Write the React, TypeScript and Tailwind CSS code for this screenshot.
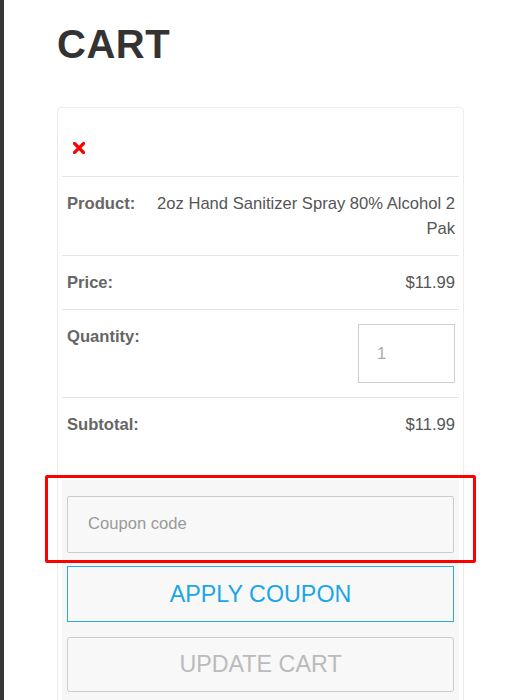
import React from 'react';

const rows = [
  { label: 'Price:', value: '$11.99' },
];

const CartRow = ({ label, children }: { label: string; children: React.ReactNode }) => (
  <div className="flex justify-between items-start border-t border-[#e4e4e4] pt-[14px] pb-[14px] pl-[5px] pr-[4px] leading-[25px]">
    <span className="font-bold text-[#666] shrink-0">{label}</span>
    {children}
  </div>
);

const App = () => {
  return (
    <div className="relative min-h-[700px] bg-white border-l-4 border-[#363636] font-['Liberation_Sans',Arial,sans-serif] text-[16.6px] overflow-hidden">
      {/* Heading */}
      <div className="pl-[53px] pt-[21px]">
        <h1 className="text-[40px] leading-[46px] font-bold text-[#333] tracking-[0.5px]">CART</h1>
      </div>

      {/* Cart card */}
      <div className="ml-[53px] mt-[40px] w-[407px] border border-[#ececec] rounded-[4px] px-[4px] pb-[20px]">
        {/* Remove */}
        <div className="pl-[11px] pt-[34px] pb-[22px]">
          <svg width="12" height="12" viewBox="0 0 12 12">
            <path d="M1.5 1.5 L10.5 10.5 M10.5 1.5 L1.5 10.5" stroke="#ff0000" strokeWidth="3.2" strokeLinecap="square" />
          </svg>
        </div>

        <CartRow label="Product:">
          <span className="text-[#555] text-right ml-[20px]">2oz Hand Sanitizer Spray 80% Alcohol 2 Pak</span>
        </CartRow>

        {rows.map((r) => (
          <CartRow key={r.label} label={r.label}>
            <span className="text-[#555]">{r.value}</span>
          </CartRow>
        ))}

        <CartRow label="Quantity:">
          <div className="w-[97px] h-[59px] border border-[#cfcfcf] flex items-center pl-[18px] text-[#aaa]">1</div>
        </CartRow>

        <CartRow label="Subtotal:">
          <span className="text-[#555]">$11.99</span>
        </CartRow>

        {/* Coupon section */}
        <div className="mt-[29px] bg-[#f7f7f7] px-[5px] pt-[16px] pb-[10px] flex flex-col">
          <div className="h-[57px] border border-[#cccccc] rounded-[2px] bg-[#f8f8f8] flex items-center pl-[20px] text-[#999]">
            Coupon code
          </div>
          <div className="mt-[13px] h-[56px] ring-1 ring-inset ring-[#29abe2] bg-[#f8f8f8] text-[#1ba6e6] text-[23.3px] flex items-center justify-center">
            APPLY COUPON
          </div>
          <div className="mt-[15px] h-[55px] border border-[#cccccc] rounded-[3px] bg-[#f8f8f8] text-[#bbbbbb] text-[23.3px] flex items-center justify-center">
            UPDATE CART
          </div>
        </div>
      </div>

      {/* Highlight annotation */}
      <div className="absolute left-[41px] top-[475px] w-[431px] h-[88px] border-[3.5px] border-[#ff0000] rounded-[2px] pointer-events-none" />
    </div>
  );
};

export default App;
